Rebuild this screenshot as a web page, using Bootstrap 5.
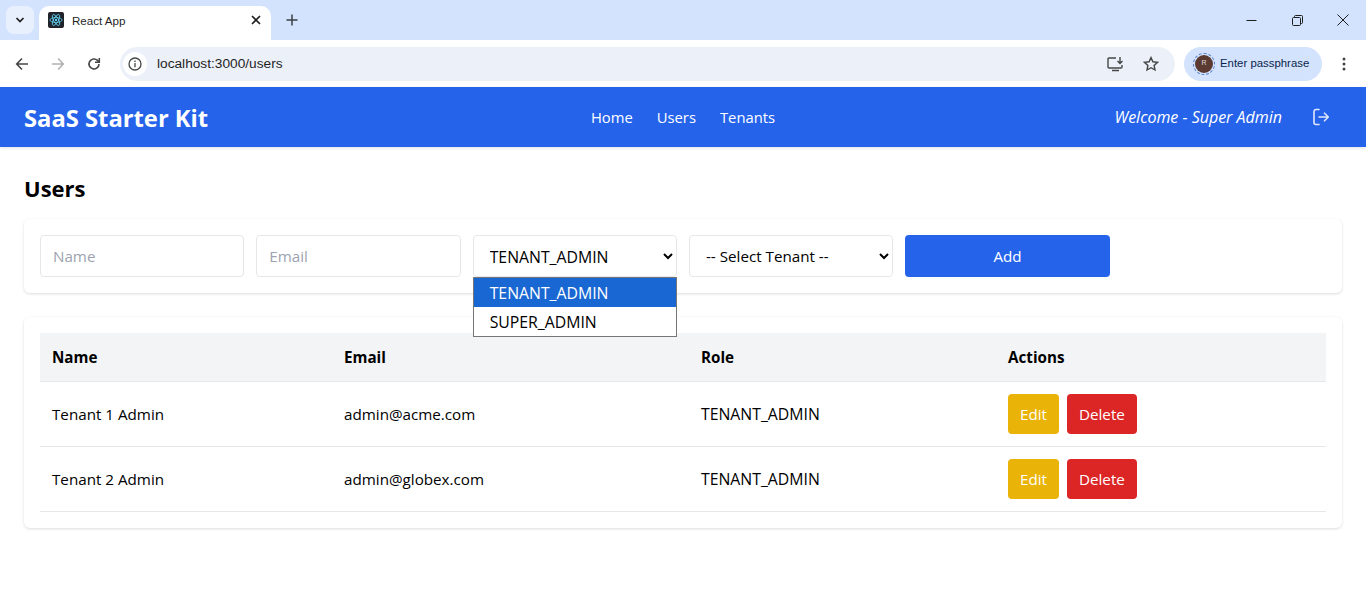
<!DOCTYPE html>
<html lang="en">
<head>
    <meta charset="UTF-8">
    <meta name="viewport" content="width=device-width, initial-scale=1.0">
    <title>React App</title>
    <link rel="stylesheet" href="https://cdn.jsdelivr.net/npm/bootstrap@5.3.0/dist/css/bootstrap.min.css">
    <style>
        html, body { height: 100%; overflow: hidden; }
        body { font-family: "Open Sans", "Noto Sans", sans-serif; font-size: 15.2px; color: #000; background: #fff; }

        /* browser chrome */
        .tab-strip { height: 40px; background: #d3e3fd; padding-left: 6px; }
        .tab-menu { width: 28px; height: 28px; margin-top: 6px; border-radius: 8px; background: #e8f0fe; }
        .tab-current { width: 232px; height: 34px; margin-top: 6px; margin-left: 5px; padding: 0 10px 6px 9px; background: #fff; border-radius: 10px 10px 0 0; font-family: "Liberation Sans", sans-serif; font-size: 11.6px; color: #1f1f1f; }
        .tab-label { padding-top: 1px; }
        .favicon { width: 16px; height: 16px; background: #20232a; border-radius: 2px; }
        .tab-new { width: 36px; height: 28px; margin-top: 6px; margin-left: 3px; }
        .win-btn { width: 46px; height: 40px; }
        .tool-bar { height: 47px; background: #fff; padding-left: 8px; padding-right: 8px; }
        .tool-btn { width: 28px; height: 28px; }
        .url-box { height: 34px; margin-left: 12px; background: #ecf1f9; border-radius: 17px; padding: 0 12px 0 3px; font-family: "Liberation Sans", sans-serif; font-size: 13.7px; color: #1f1f1f; }
        .url-info { width: 24px; height: 24px; background: #fff; border-radius: 50%; margin-right: 10px; }
        .url-text { padding-top: 1px; }
        .url-install { margin-right: 18px; }
        .pass-pill { width: 138px; height: 34px; margin-left: 9px; margin-right: 8px; background: #d3e3fd; border-radius: 17px; padding-left: 11px; font-family: "Liberation Sans", sans-serif; font-size: 11.4px; color: #0b1f4b; }
        .avatar-ring { width: 18px; height: 18px; margin-right: 7px; background: #5b3a32; border-radius: 50%; outline: 1px dashed #5b7fc0; outline-offset: 1px; color: #ddd; font-size: 7px; }

        /* app */
        .app-nav { height: 60px; background: #2563eb; padding: 0 24px; color: #fff; box-shadow: 0 1px 3px rgba(0,0,0,.12); }
        .app-brand { font-size: 23.75px; font-weight: 700; flex: 1 1 0; line-height: 1; padding-top: 4px; }
        .app-links { gap: 24px; font-size: 14.8px; }
        .app-links a { color: #fff; text-decoration: none; }
        .app-right { flex: 1 1 0; }
        .app-welcome { font-style: italic; font-size: 16px; }
        .logout-icon { margin-left: 29px; margin-right: 11px; }
        .app-main { padding: 24px; }
        .page-title { font-size: 22px; font-weight: 700; line-height: 34px; margin-bottom: 14px; }
        .panel-box { background: #fff; border-radius: 6px; box-shadow: 0 1px 3px rgba(0,0,0,.14); padding: 16px; }
        .add-form { display: grid; grid-template-columns: repeat(6, 1fr); gap: 12px; margin-bottom: 24px; }
        .field-box { height: 42px; border: 1px solid #e5e7eb; border-radius: 4px; padding: 0 12px; font-size: 15.2px; color: #000; background-color: #fff; width: 100%; }
        .field-box::placeholder { color: #9ca3af; }
        select.field-box { font-family: inherit; }
        .caps-text { font-size: 15.8px; }
        select.caps-text { padding-top: 2px; }
        .add-btn { height: 42px; background: #2563eb; color: #fff; font-size: 15.2px; border: 0; border-radius: 4px; }
        .select-wrap { position: relative; }
        .select-list { position: absolute; left: 0; right: 0; top: 42px; z-index: 5; background: #fff; border: 1px solid #767676; }
        .select-list div { padding-left: 16px; height: 29px; line-height: 31px; }
        .select-list .opt-on { background: #1967d2; color: #fff; }

        .user-table { width: 100%; table-layout: fixed; margin: 0; }
        .user-table th { background: #f3f4f6; height: 48px; padding: 2px 12px 0; vertical-align: middle; border-bottom: 1px solid #e5e7eb; font-weight: 700; }
        .user-table td { height: 65px; padding: 2px 12px 0; vertical-align: middle; border-bottom: 1px solid #e5e7eb; }
        .user-table td.act-cell { padding: 0 12px; }
        .act-btn { height: 40px; color: #fff; border: 0; border-radius: 4px; font-size: 15.2px; padding: 2px 12px 0; margin-right: 8px; }
        .act-edit { background: #eab308; }
        .act-del { background: #dc2626; }
    </style>
</head>
<body>

    <!-- Browser tabs -->
    <div class="tab-strip d-flex align-items-start">
        <div class="tab-menu d-flex align-items-center justify-content-center">
            <svg width="10" height="8" viewBox="0 0 10 8"><path d="M1.5 2 5 5.5 8.5 2" fill="none" stroke="#1f1f1f" stroke-width="1.7"/></svg>
        </div>
        <div class="tab-current d-flex align-items-center">
            <span class="favicon d-flex align-items-center justify-content-center me-2">
                <svg width="14" height="14" viewBox="-12 -12 24 24" fill="none" stroke="#61dafb" stroke-width="1.3"><circle r="2" fill="#61dafb" stroke="none"/><ellipse rx="10.5" ry="4.2"/><ellipse rx="10.5" ry="4.2" transform="rotate(60)"/><ellipse rx="10.5" ry="4.2" transform="rotate(120)"/></svg>
            </span>
            <span class="tab-label flex-grow-1">React App</span>
            <svg width="10" height="10" viewBox="0 0 10 10"><path d="M1 1l8 8M9 1l-8 8" stroke="#1f1f1f" stroke-width="1.6"/></svg>
        </div>
        <div class="tab-new d-flex align-items-center justify-content-center">
            <svg width="12" height="12" viewBox="0 0 12 12"><path d="M6 .5v11M.5 6h11" stroke="#3c4043" stroke-width="1.5"/></svg>
        </div>
        <div class="flex-grow-1"></div>
        <div class="win-btn d-flex align-items-center justify-content-center">
            <svg width="11" height="11" viewBox="0 0 11 11"><path d="M.5 5.5h10" stroke="#1f1f1f"/></svg>
        </div>
        <div class="win-btn d-flex align-items-center justify-content-center">
            <svg width="11" height="11" viewBox="0 0 11 11" fill="none" stroke="#1f1f1f"><rect x=".5" y="2.5" width="8" height="8" rx="1"/><path d="M2.5 2.5v-1a1 1 0 0 1 1-1h6a1 1 0 0 1 1 1v6a1 1 0 0 1-1 1h-1"/></svg>
        </div>
        <div class="win-btn d-flex align-items-center justify-content-center">
            <svg width="12" height="12" viewBox="0 0 12 12"><path d="M.5.5l11 11M11.5.5l-11 11" stroke="#1f1f1f"/></svg>
        </div>
    </div>

    <!-- Browser toolbar -->
    <div class="tool-bar d-flex align-items-center">
        <div class="tool-btn d-flex align-items-center justify-content-center">
            <svg width="14" height="14" viewBox="0 0 14 14" fill="none" stroke="#444746" stroke-width="1.6"><path d="M13 7H2M7 1.5 1.7 7 7 12.5"/></svg>
        </div>
        <div class="tool-btn d-flex align-items-center justify-content-center ms-2">
            <svg width="14" height="14" viewBox="0 0 14 14" fill="none" stroke="#b0b2b4" stroke-width="1.6"><path d="M1 7h11M7 1.5 12.3 7 7 12.5"/></svg>
        </div>
        <div class="tool-btn d-flex align-items-center justify-content-center ms-2">
            <svg width="14" height="14" viewBox="0 0 14 14" fill="none" stroke="#444746" stroke-width="1.6"><path d="M12 7a5 5 0 1 1-1.5-3.6L12 5"/><path d="M12.3 1v4.2H8" /></svg>
        </div>
        <div class="url-box flex-grow-1 d-flex align-items-center">
            <span class="url-info d-flex align-items-center justify-content-center">
                <svg width="14" height="14" viewBox="0 0 14 14" fill="none" stroke="#444746" stroke-width="1.3"><circle cx="7" cy="7" r="6"/><path d="M7 6v4.2M7 3.6v1.3"/></svg>
            </span>
            <span class="url-text flex-grow-1">localhost:3000/users</span>
            <svg class="url-install" width="18" height="16" viewBox="0 0 18 16" fill="none" stroke="#444746" stroke-width="1.4"><path d="M9 2H2a1 1 0 0 0-1 1v8a1 1 0 0 0 1 1h12a1 1 0 0 0 1-1V9M5 14.5h7M13 1v6M10.5 5 13 7.5 15.5 5"/></svg>
            <svg class="me-1" width="16" height="16" viewBox="0 0 16 16" fill="none" stroke="#444746" stroke-width="1.4"><path d="M8 1.6l1.9 4.2 4.6.5-3.4 3.1.9 4.6L8 11.7 4 14l.9-4.6L1.5 6.3l4.6-.5z"/></svg>
        </div>
        <div class="pass-pill d-flex align-items-center">
            <span class="avatar-ring d-flex align-items-center justify-content-center">R</span>
            <span>Enter passphrase</span>
        </div>
        <div class="tool-btn d-flex align-items-center justify-content-center">
            <svg width="4" height="14" viewBox="0 0 4 14" fill="#444746"><circle cx="2" cy="2" r="1.5"/><circle cx="2" cy="7" r="1.5"/><circle cx="2" cy="12" r="1.5"/></svg>
        </div>
    </div>

    <!-- App navbar -->
    <nav class="app-nav d-flex align-items-center">
        <div class="app-brand">SaaS Starter Kit</div>
        <div class="app-links d-flex">
            <a href="#">Home</a>
            <a href="#">Users</a>
            <a href="#">Tenants</a>
        </div>
        <div class="app-right d-flex align-items-center justify-content-end">
            <span class="app-welcome">Welcome - Super Admin</span>
            <svg class="logout-icon" width="20" height="20" viewBox="0 0 20 20" fill="none" stroke="#dfe7fb" stroke-width="1.6" stroke-linecap="round" stroke-linejoin="round"><path d="M8 2.5H5a2 2 0 0 0-2 2v11a2 2 0 0 0 2 2h3M8 10h9M13.5 6.2 17.3 10l-3.8 3.8"/></svg>
        </div>
    </nav>

    <main class="app-main">
        <div class="page-title">Users</div>

        <div class="panel-box add-form">
            <input class="field-box" placeholder="Name">
            <input class="field-box" placeholder="Email">
            <div class="select-wrap">
                <select class="field-box caps-text">
                    <option>TENANT_ADMIN</option>
                    <option>SUPER_ADMIN</option>
                </select>
                <div class="select-list caps-text">
                    <div class="opt-on">TENANT_ADMIN</div>
                    <div>SUPER_ADMIN</div>
                </div>
            </div>
            <select class="field-box">
                <option>-- Select Tenant --</option>
            </select>
            <button class="add-btn">Add</button>
        </div>

        <div class="panel-box">
            <table class="user-table">
                <colgroup>
                    <col style="width:292px"><col style="width:357px"><col style="width:307px"><col>
                </colgroup>
                <thead>
                    <tr><th>Name</th><th>Email</th><th>Role</th><th>Actions</th></tr>
                </thead>
                <tbody>
                    <tr>
                        <td>Tenant 1 Admin</td>
                        <td>admin@acme.com</td>
                        <td class="caps-text">TENANT_ADMIN</td>
                        <td class="act-cell"><button class="act-btn act-edit">Edit</button><button class="act-btn act-del">Delete</button></td>
                    </tr>
                    <tr>
                        <td>Tenant 2 Admin</td>
                        <td>admin@globex.com</td>
                        <td class="caps-text">TENANT_ADMIN</td>
                        <td class="act-cell"><button class="act-btn act-edit">Edit</button><button class="act-btn act-del">Delete</button></td>
                    </tr>
                </tbody>
            </table>
        </div>
    </main>

    <script src="https://cdn.jsdelivr.net/npm/bootstrap@5.3.0/dist/js/bootstrap.bundle.min.js"></script>
</body>
</html>
